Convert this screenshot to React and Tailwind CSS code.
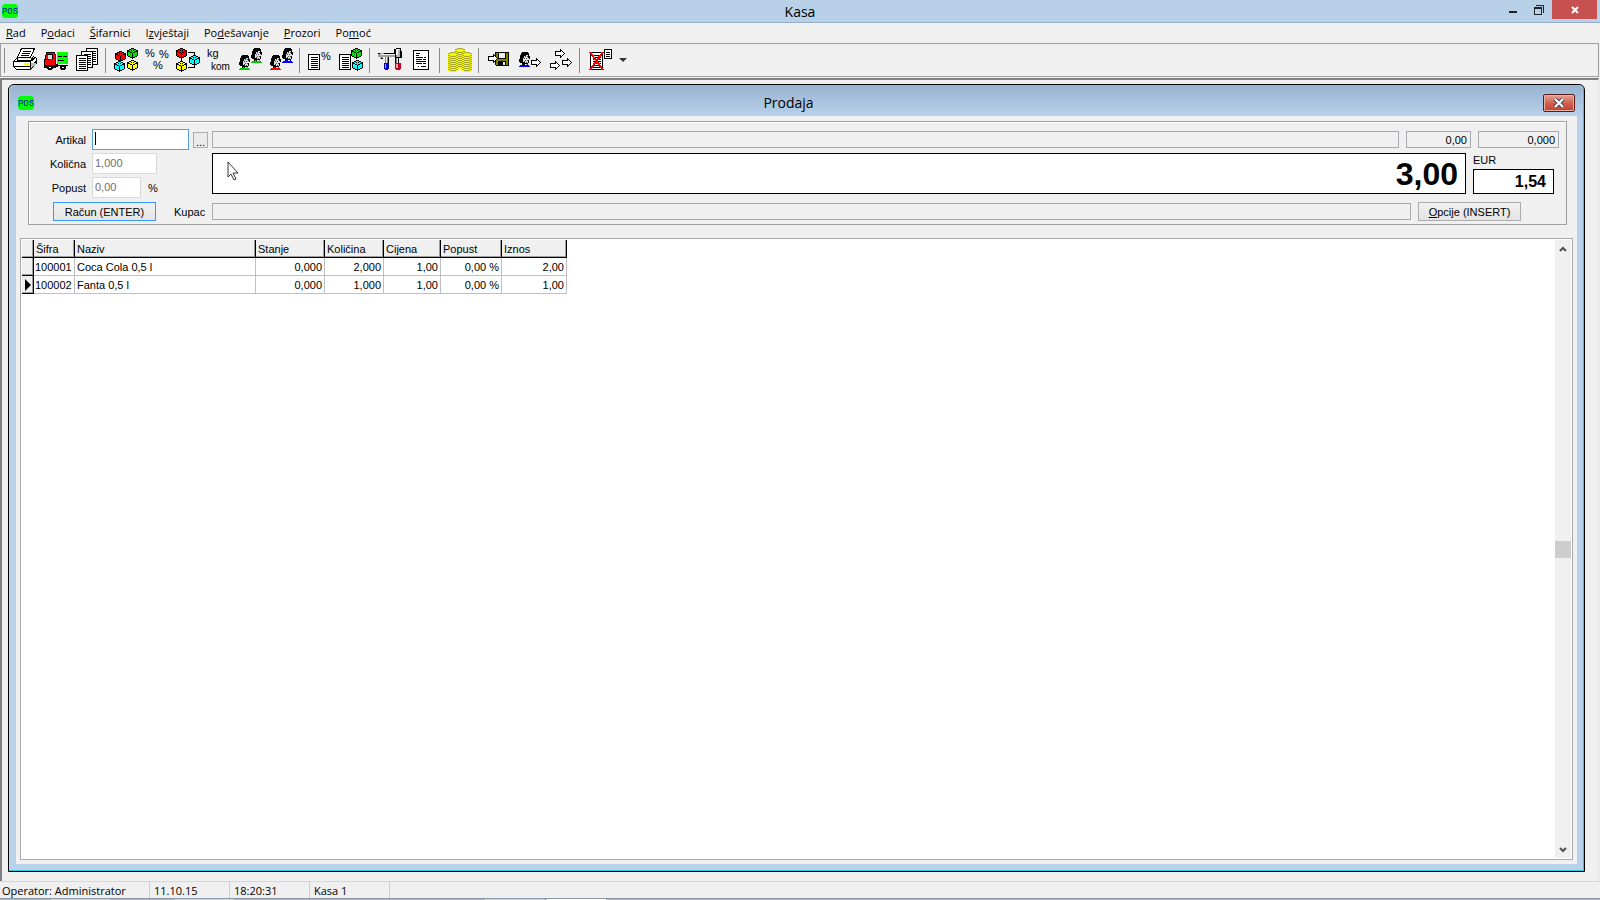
import React, { useState } from 'react';

const MENU = [
  ['', 'R', 'ad'],
  ['P', 'o', 'daci'],
  ['', 'Š', 'ifarnici'],
  ['I', 'z', 'vještaji'],
  ['Po', 'd', 'ešavanje'],
  ['', 'P', 'rozori'],
  ['Po', 'm', 'oć'],
];

const ITEMS = [
  { sifra: '100001', naziv: 'Coca Cola 0,5 l', stanje: '0,000', kolicina: '2,000', cijena: '1,00', popust: '0,00 %', iznos: '2,00' },
  { sifra: '100002', naziv: 'Fanta 0,5 l', stanje: '0,000', kolicina: '1,000', cijena: '1,00', popust: '0,00 %', iznos: '1,00' },
];

// ---------- ICONS (24x24 pixel art) ----------

const Icon = ({ children }) => (
  <svg width="24" height="24" viewBox="0 0 24 24" shapeRendering="crispEdges" className="overflow-visible" aria-hidden="true">
    {children}
  </svg>
);

const Cube = ({ x, y, color }) => (
  <g transform={`translate(${x} ${y})`}>
    <path d="M5.500.5l5 2v5l-5 3-5-3v-5z" fill={color} stroke="#000" />
    <path d="M1 3h2v1h2v1h1v-1h2v-1h2v1h-2v1h-2v5h-1v-5h-2v-1h-2zM4 2h1v1h-1zM6 2h1v1h-1z" fill="#000" />
  </g>
);

const Head = ({ x, y, shirt }) => (
  <g transform={`translate(${x} ${y})`}>
    <path d="M3 0h6v1h1v3h1v3h-1v4h-1v1h-3v1h-3v-2h-2v-1h-1v-3h1v-4h1v-2h1z" fill="#000" />
    <path d="M5 4h2v-1h2v3h1v2h-1v3h-3v-1h-2v-4h1z" fill="#dcdcdc" />
    <path d="M6 4h1v1h-1zM8 4h1v1h-1zM5 6h1v1h-1zM7 6h1v1h-1zM6 8h1v1h-1zM8 8h1v1h-1zM5 9h1v1h-1zM7 10h1v1h-1z" fill="#555" />
    <path d="M1 13h3v-1h1v1h3v-1h1v1h1v1h1v1h-11v-1h1z" fill={shirt} />
  </g>
);

const Arrow = ({ x, y }) => (
  <path
    transform={`translate(${x} ${y})`}
    d="M.5 2.500h5v-2l4 4-4 4v-2h-5z"
    fill="#fff"
    stroke="#000"
    strokeWidth="1"
  />
);

const Sheet = ({ x, y, w = 12, h = 15 }) => (
  <g transform={`translate(${x} ${y})`}>
    <rect width={w} height={h} fill="#000" />
    <rect x="1" y="1" width={w - 2} height={h - 2} fill="#fff" />
    {Array.from({ length: Math.floor((h - 4) / 2) }, (_, i) => (
      <rect key={i} x={w > 10 ? 3 : 2} y={3 + i * 2} width={w > 10 ? w - 5 : w - 4} height="1" fill="#000" />
    ))}
  </g>
);

const Percent = ({ x, y }) => (
  <text x={x} y={y} fontSize="11" fontFamily="Liberation Sans, sans-serif" fill="#000">%</text>
);

const PrinterIcon = () => (
  <Icon>
    <path d="M8.5.5h13l-4 9h-13z" fill="#fff" stroke="#000" />
    <path d="M10 3h8v1h-8zM9 5h8v1h-8zM8 7h8v1h-8z" fill="#000" />
    <path d="M4.500 9.500l-4 4v5l3 3h14l6-6v-5l-3-2-3 4h-13z" fill="#fff" stroke="#000" />
    <path d="M.5 13.500h17l5-4M17.500 13.500v8M1 18.500h16l6-5" fill="none" stroke="#000" />
    <path d="M18 15h5v2l-5 3z" fill="#bbb" />
    <path d="M11 15h5v2h-5z" fill="#ff0" />
  </Icon>
);

const TruckIcon = () => (
  <Icon>
    <path d="M2 4h9v2h1v14h-12v-9h1v-4h1z" fill="#000" />
    <path d="M3 5h7v1h-7zM2 7h2v4h-2zM5 11h6v6h-10v-5h4zM9 6h2v5h-2z" fill="#f00" />
    <path d="M4 7h4v4h-4z" fill="#ddd" />
    <path d="M13 4h11v12h-11z" fill="#0f0" />
    <path d="M14 8h4v1h-4zM19 8h4v1h-4zM14 12h6v1h-6zM0 17h24v1h-24zM12 16h2v3h-2z" fill="#000" />
    <path d="M4 17h4v1h1v3h-1v1h-4v-1h-1v-3h1zM17 17h4v1h1v3h-1v1h-4v-1h-1v-3h1z" fill="#000" />
    <path d="M5 19h2v1h-2zM18 19h2v1h-2z" fill="#fff" />
  </Icon>
);

const DocsIcon = () => (
  <Icon>
    <Sheet x={11} y={0} w={12} h={17} />
    <Sheet x={6} y={3} w={12} h={17} />
    <Sheet x={1} y={7} w={12} h={16} />
  </Icon>
);

const CubesIcon = () => (
  <Icon>
    <Cube x={13} y={0} color="#00e000" />
    <Cube x={1} y={3} color="#f00" />
    <Cube x={13} y={12} color="#ff0" />
    <Cube x={0} y={13} color="#0ff" />
  </Icon>
);

const PercentsIcon = () => (
  <Icon>
    <Percent x={0} y={9} />
    <Percent x={14} y={10} />
    <Percent x={8} y={21} />
  </Icon>
);

const LinkedCubesIcon = () => (
  <Icon>
    <path d="M11.500 4.500h7v4M5.500 10v4M11.500 19.500h7v-3" fill="none" stroke="#000" />
    <Cube x={0} y={0} color="#f00" />
    <Cube x={13} y={7} color="#0ff" />
    <Cube x={0} y={13} color="#ff0" />
  </Icon>
);

const UnitsIcon = () => (
  <Icon>
    <text x="0" y="9" fontSize="11" fontFamily="Liberation Sans, sans-serif">kg</text>
    <text x="4" y="22" fontSize="10" fontFamily="Liberation Sans, sans-serif">kom</text>
  </Icon>
);

const PeopleIcon = ({ front, back }) => (
  <Icon>
    <Head x={13} y={0} shirt={back} />
    <Head x={1} y={7} shirt={front} />
  </Icon>
);

const ListPercentIcon = () => (
  <Icon>
    <Sheet x={0} y={6} w={12} h={16} />
    <Percent x={13} y={12} />
  </Icon>
);

const ListCubesIcon = () => (
  <Icon>
    <Sheet x={0} y={6} w={12} h={16} />
    <Cube x={12} y={0} color="#00e000" />
    <Cube x={13} y={12} color="#0ff" />
  </Icon>
);

const ToolsIcon = () => (
  <Icon>
    <path d="M1 5h15v-4h2v-1h5v3h1v7h-3v8h-4v-9h-6v9h-4v-9h-2v2h-3v-3h-2v-3h1z" fill="#000" />
    <path d="M0 6h2v-1h4v1h11v3h-12v1h-2v1h-1v-2h-2z" fill="#a0a0a0" />
    <path d="M3 6h14v1h-14zM18 1h4v7h-4z" fill="#f0f0f0" />
    <path d="M20 2h2v7h-4v-2h2z" fill="#b0b0b0" />
    <path d="M7 9h3v8h-3zM18 10h2v8h-2z" fill="#888" />
    <path d="M8 9h1v8h-1zM19 10h1v7h-1z" fill="#eee" />
    <path d="M6 15h5v6h-1v1h-3v-1h-1z" fill="#0000a0" />
    <path d="M7 15h2v6h-2z" fill="#00f" />
    <path d="M7 16h1v4h-1z" fill="#0ff" />
    <path d="M17 15h6v6h-1v1h-4v-1h-1z" fill="#c00020" />
    <path d="M18 16h2v4h-2z" fill="#f9a" />
  </Icon>
);

const ReportIcon = () => (
  <Icon>
    <path d="M4 2h16v20h-16z" fill="#000" />
    <path d="M5 3h14v18h-14z" fill="#fff" />
    <path d="M7 5h4v1h-4zM7 7h3v1h-3zM7 9h7v1h-7zM15 9h2v1h-2zM7 11h6v1h-6zM14 11h3v1h-3zM7 13h10v1h-10zM7 15h6v1h-6zM14 15h3v1h-3zM12 18h5v1h-5zM9 18h1v1h-1z" fill="#000" />
  </Icon>
);

const Stack = ({ x, y, h }) => (
  <g transform={`translate(${x} ${y})`}>
    <path d={`M2 0h6v1h2v${h - 2}h-2v1h-6v-1h-2v-${h - 2}h2z`} fill="#f5f500" />
    {Array.from({ length: Math.floor((h - 4) / 2) }, (_, i) => (
      <path key={i} d={`M0 ${3 + i * 2}h2v1h6v-1h2v1h-2v1h-6v-1h-2z`} fill="#a9a930" />
    ))}
    <path d="M2 0h6v1h-6zM0 1h2v1h-2zM8 1h2v1h-2z" fill="#a9a930" />
  </g>
);

const CoinsIcon = () => (
  <Icon>
    <Stack x={7} y={0} h={21} />
    <Stack x={0} y={4} h={20} />
    <Stack x={14} y={4} h={20} />
  </Icon>
);

const SaveIcon = () => (
  <Icon>
    <path d="M8 4h14v14h-13v-1h-1z" fill="#000" />
    <path d="M9 5h12v12h-12z" fill="#808000" />
    <path d="M11 5h8v6h-8z" fill="#000" />
    <path d="M12 5h6v5h-6z" fill="#eee" />
    <path d="M11 13h8v4h-8z" fill="#000" />
    <path d="M16 14h2v3h-2z" fill="#eee" />
    <Arrow x={1} y={6} />
  </Icon>
);

const PersonArrowIcon = () => (
  <Icon>
    <Head x={1} y={4} shirt="#00f" />
    <Arrow x={13} y={10} />
  </Icon>
);

const ArrowsIcon = () => (
  <Icon>
    <Arrow x={6} y={1} />
    <Arrow x={1} y={13} />
    <Arrow x={13} y={10} />
  </Icon>
);

const DeleteDocIcon = () => (
  <Icon>
    <Sheet x={2} y={4} w={13} h={18} />
    <Sheet x={16} y={1} w={8} h={10} />
    <path d="M2 4l13 18M15 4l-13 18" fill="none" stroke="#f00" strokeWidth="2" />
  </Icon>
);

// Toolbar groups, a divider is drawn before each one
const TOOLBAR = [
  [
    { label: 'Štampa', icon: <PrinterIcon /> },
    { label: 'Dostava', icon: <TruckIcon /> },
    { label: 'Dokumenti', icon: <DocsIcon /> },
  ],
  [
    { label: 'Artikli', icon: <CubesIcon /> },
    { label: 'Porezi', icon: <PercentsIcon /> },
    { label: 'Grupe', icon: <LinkedCubesIcon /> },
    { label: 'Jedinice mjere', icon: <UnitsIcon /> },
    { label: 'Kupci', icon: <PeopleIcon front="#0c0" back="#0c0" /> },
    { label: 'Operateri', icon: <PeopleIcon front="#f00" back="#00f" /> },
  ],
  [
    { label: 'Izvještaj poreza', icon: <ListPercentIcon /> },
    { label: 'Izvještaj artikala', icon: <ListCubesIcon /> },
  ],
  [
    { label: 'Alati', icon: <ToolsIcon /> },
    { label: 'Račun', icon: <ReportIcon /> },
  ],
  [{ label: 'Novac', icon: <CoinsIcon /> }],
  [
    { label: 'Snimi', icon: <SaveIcon /> },
    { label: 'Prijava', icon: <PersonArrowIcon /> },
    { label: 'Prenos', icon: <ArrowsIcon /> },
  ],
  [{ label: 'Storno', icon: <DeleteDocIcon /> }],
];

const PosLogo = () => (
  <svg width="16" height="16" viewBox="0 0 16 16" className="overflow-visible" aria-hidden="true">
    <path d="M2 1h12l2 2v10l-2 2h-12l-2-2v-10z" fill="#0f0" />
    <text x="8" y="11" fontSize="9" textAnchor="middle" fontFamily="Liberation Mono, monospace" fill="#0000d0">POS</text>
  </svg>
);

const Chevron = ({ down }) => (
  <svg width="8" height="6" viewBox="0 0 8 6" aria-hidden="true">
    <path d={down ? 'M1 1l3 3 3-3' : 'M1 5l3-3 3 3'} fill="none" stroke="#505050" strokeWidth="2" />
  </svg>
);

const ReadOnly = ({ label, value = '', className }) => (
  <input
    readOnly
    aria-label={label}
    value={value}
    className={`h-[17px] min-w-0 border border-[#a9a9b0] bg-[#f0f0f0] px-[3px] pt-px text-right outline-none ${className}`}
  />
);

const TH = 'border-b border-r border-black bg-[#f0f0f0] px-[2px] pt-px text-left font-normal shadow-[inset_-1px_-1px_0_#a0a0a0]';
const TD = 'border-b border-r border-[#c0c0c0] px-[2px] pt-px';

const App = () => {
  const [artikal, setArtikal] = useState('');

  return (
    <div className="flex min-h-screen flex-col bg-[#f0f0f0] font-['Liberation_Sans',Arial,sans-serif] text-[11px] leading-[13px] text-black">
      {/* TITLE BAR */}
      <header className="flex h-[23px] items-start border-b border-[#93aec6] bg-[#b8d1e9]">
        <div className="flex w-28 pl-[2px] pt-[3px]"><PosLogo /></div>
        <h1 className="flex-1 text-center font-['Open_Sans',sans-serif] text-[14px] leading-[23px]">Kasa</h1>
        <div className="flex w-28 items-start justify-end pr-[3px]">
          <button aria-label="Minimize" className="flex h-[19px] w-[26px] items-center justify-center">
            <svg width="8" height="8" viewBox="0 0 8 8"><path d="M0 5h8v2H0z" fill="#222" /></svg>
          </button>
          <button aria-label="Restore" className="flex h-[19px] w-[26px] items-center justify-center">
            <svg width="10" height="10" viewBox="0 0 10 10" shapeRendering="crispEdges">
              <path d="M2 0h8v8H9V1H2zM0 2h8v8H0zM1 4v5h6V4z" fillRule="evenodd" fill="#222" />
            </svg>
          </button>
          <button aria-label="Close" className="flex h-[19px] w-[45px] items-center justify-center bg-[#c75050]">
            <svg width="8" height="8" viewBox="0 0 8 8"><path d="M1 1l6 6M7 1l-6 6" stroke="#fff" strokeWidth="2" /></svg>
          </button>
        </div>
      </header>

      {/* MENU */}
      <nav className="flex h-5 items-center gap-[15px] pb-[2px] pl-[6px] font-['Open_Sans',sans-serif] text-[11px]">
        {MENU.map(([pre, key, post]) => (
          <button key={pre + key + post} className="whitespace-nowrap">
            {pre}<u>{key}</u>{post}
          </button>
        ))}
      </nav>

      {/* TOOLBAR */}
      <div className="mr-[1px] flex h-[34px] items-center border border-[#a0a0a0] pl-[1px]">
        {TOOLBAR.map((group, i) => (
          <div key={i} className="flex items-center">
            <span className="ml-[2px] mr-[5px] h-[25px] w-px bg-[#8c8c8c]" />
            {group.map((b) => (
              <button key={b.label} aria-label={b.label} className="flex h-7 w-[31px] items-center pl-[3px]">
                {b.icon}
              </button>
            ))}
          </div>
        ))}
        <button aria-label="Više" className="ml-[3px] flex h-7 w-3 items-center">
          <svg width="8" height="4" viewBox="0 0 8 4"><path d="M0 0h8l-4 4z" fill="#333" /></svg>
        </button>
      </div>

      {/* WORKSPACE */}
      <main className="mr-[1px] mt-[1px] flex flex-1 flex-col border-l-2 border-t-2 border-[#808080] border-r border-r-[#e3e3e3] pb-[9px] pl-[6px] pr-[13px] pt-1">
        <section className="flex flex-1 flex-col rounded-t-md border border-black bg-[#b9d1ea] p-px pt-0 shadow-[inset_-1px_-1px_0_#30c8e0]">
          <div className="flex h-[31px] items-center rounded-t-md bg-linear-to-b from-[#98b2d1] to-[#b9d1ea] pl-2 pr-2 pt-1">
            <div className="w-12"><PosLogo /></div>
            <h2 className="flex-1 text-center font-['Open_Sans',sans-serif] text-[14px] leading-5">Prodaja</h2>
            <div className="flex w-16 justify-end">
              <button aria-label="Zatvori" className="flex h-[18px] w-8 items-center justify-center rounded-xs border border-[#5a1a1a] bg-linear-to-b from-[#e4a395] via-[#d0604e] to-[#c0402c] shadow-[inset_0_0_0_1px_#e9b0a8]">
                <svg width="12" height="10" viewBox="0 0 12 10">
                  <path d="M2 1l8 8M10 1l-8 8" stroke="#4a4a5a" strokeWidth="4" />
                  <path d="M2 1l8 8M10 1l-8 8" stroke="#fff" strokeWidth="2" />
                </svg>
              </button>
            </div>
          </div>

          <div className="mx-[6px] mb-[6px] flex flex-1 flex-col bg-[#f0f0f0] px-1 pb-1 pt-[5px]">
            {/* SALE FORM */}
            <div className="ml-2 mr-[6px] flex h-[104px] border border-[#a0a0a0] pr-[7px] pt-[7px] shadow-[inset_1px_1px_0_#fff]">
              <div className="relative flex w-[183px] shrink-0 flex-col gap-[3px]">
                <div className="flex h-[21px] items-center">
                  <label htmlFor="artikal" className="w-[57px] pt-px text-right">Artikal</label>
                  <input
                    id="artikal"
                    value={artikal}
                    onChange={(e) => setArtikal(e.target.value)}
                    className="ml-[6px] h-[21px] w-[97px] border border-[#569de5] bg-white px-[3px] outline-none"
                  />
                  <button aria-label="Traži artikal" className="ml-1 h-4 w-[15px] border border-[#acacac] bg-[#ebebeb] leading-[18px]">...</button>
                </div>
                <div className="flex h-[21px] items-center">
                  <label htmlFor="kolicina" className="w-[57px] pt-px text-right">Količna</label>
                  <input id="kolicina" disabled defaultValue="1,000" className="ml-[6px] h-[21px] w-[65px] border border-[#d9d9d9] bg-white px-[2px] pb-[2px] text-[#6d6d6d]" />
                </div>
                <div className="flex h-[21px] items-center">
                  <label htmlFor="popust" className="w-[57px] pt-px text-right">Popust</label>
                  <input id="popust" disabled defaultValue="0,00" className="ml-[6px] h-[21px] w-[49px] border border-[#d9d9d9] bg-white px-[2px] pb-[2px] text-[#6d6d6d]" />
                  <span className="ml-[7px] pt-px">%</span>
                </div>
                <div className="flex h-[21px] items-center">
                  <button className="ml-6 h-[19px] w-[103px] border border-[#3399ff] bg-linear-to-b from-[#f0f0f0] to-[#e5e5e5] pt-px">Račun (ENTER)</button>
                  <label htmlFor="kupac" className="ml-[18px] pt-px">Kupac</label>
                </div>
                {artikal === '' && <span className="absolute left-[66px] top-[3px] h-[13px] w-px bg-black" />}
              </div>

              <div className="flex min-w-0 flex-1 flex-col">
                <div className="mt-[2px] flex">
                  <ReadOnly label="Naziv artikla" className="flex-1" />
                  <ReadOnly label="Cijena" value="0,00" className="ml-[7px] w-[65px]" />
                  <ReadOnly label="Stanje" value="0,000" className="ml-[7px] w-[81px]" />
                </div>
                <div className="mt-[5px] flex pr-[5px]">
                  <output className="relative h-[41px] flex-1 border border-black bg-white pr-[7px] text-right text-[32px] font-bold leading-[40px]">
                    3,00
                    <svg width="13" height="20" viewBox="0 0 13 20" className="absolute left-[14px] top-[7px]" aria-hidden="true">
                      <path d="M1 1v15l3-3 3 6 2-1-3-6h5z" fill="#fff" stroke="#334" />
                    </svg>
                  </output>
                  <div className="ml-[7px] w-[81px]">
                    <label htmlFor="eur" className="block h-4 pt-px">EUR</label>
                    <input id="eur" readOnly value="1,54" className="block h-[25px] w-full border border-black bg-white pr-[7px] text-right text-[16px] font-bold outline-none" />
                  </div>
                </div>
                <div className="mt-[8px] flex items-center pr-[38px]">
                  <input id="kupac" readOnly value="" className="h-[17px] min-w-0 flex-1 border border-[#a9a9b0] bg-[#f0f0f0] outline-none" />
                  <button className="ml-[7px] h-[19px] w-[103px] border border-[#acacac] bg-linear-to-b from-[#f0f0f0] to-[#e5e5e5] pt-px"><u>O</u>pcije (INSERT)</button>
                </div>
              </div>
            </div>

            {/* ITEMS GRID */}
            <div className="mt-[13px] flex flex-1 border border-[#a9a9a9] bg-white pl-px pt-px">
              <div className="flex-1">
                <table className="w-[545px] table-fixed border-separate border-spacing-0">
                  <colgroup>
                    <col className="w-[12px]" />
                    <col className="w-[41px]" />
                    <col className="w-[181px]" />
                    <col className="w-[69px]" />
                    <col className="w-[59px]" />
                    <col className="w-[57px]" />
                    <col className="w-[61px]" />
                    <col className="w-[65px]" />
                  </colgroup>
                  <thead>
                    <tr className="h-[18px]">
                      <th className={TH} aria-label="Red" />
                      <th className={TH}>Šifra</th>
                      <th className={TH}>Naziv</th>
                      <th className={TH}>Stanje</th>
                      <th className={TH}>Količina</th>
                      <th className={TH}>Cijena</th>
                      <th className={TH}>Popust</th>
                      <th className={TH}>Iznos</th>
                    </tr>
                  </thead>
                  <tbody>
                    {ITEMS.map((item, i) => (
                      <tr key={item.sifra} className="h-[18px]">
                        <td className="border-b border-r border-black bg-[#f0f0f0] pl-[3px] shadow-[inset_-1px_-1px_0_#a0a0a0]">
                          {i === 1 && <svg width="6" height="12" viewBox="0 0 6 12" className="block"><path d="M0 0l6 6-6 6z" /></svg>}
                        </td>
                        <td className="whitespace-nowrap border-b border-r border-[#c0c0c0] px-px pt-px">{item.sifra}</td>
                        <td className={TD}>{item.naziv}</td>
                        <td className={`${TD} text-right`}>{item.stanje}</td>
                        <td className={`${TD} text-right`}>{item.kolicina}</td>
                        <td className={`${TD} text-right`}>{item.cijena}</td>
                        <td className={`${TD} text-right`}>{item.popust}</td>
                        <td className={`${TD} text-right`}>{item.iznos}</td>
                      </tr>
                    ))}
                  </tbody>
                </table>
              </div>

              {/* SCROLLBAR */}
              <div className="mb-px mr-px flex w-4 flex-col items-center bg-[#f0f0f0]">
                <button aria-label="Gore" className="flex h-[17px] w-full items-center justify-center"><Chevron /></button>
                <div className="flex w-full flex-1 items-center">
                  <div className="h-[17px] w-full bg-[#cdcdcd]" />
                </div>
                <button aria-label="Dole" className="flex h-[17px] w-full items-center justify-center"><Chevron down /></button>
              </div>
            </div>
          </div>
        </section>
      </main>

      {/* STATUS BAR */}
      <footer className="flex h-[17px] items-stretch border-t border-[#d7d7d7] font-['Open_Sans',sans-serif] text-[11px] leading-[18px]">
        <span className="w-[150px] border-r border-[#d0d0d0] pl-[2px]">Operator: Administrator</span>
        <span className="w-20 border-r border-[#d0d0d0] pl-1">11.10.15</span>
        <span className="w-20 border-r border-[#d0d0d0] pl-1">18:20:31</span>
        <span className="w-20 border-r border-[#d0d0d0] pl-1">Kasa 1</span>
      </footer>

      {/* top edge of the taskbar */}
      <div className="flex h-[2px] border-t border-[#8b98a6] bg-[#a9b8c6]">
        <span className="ml-[51px] w-[59px] bg-[#d3dbe2]" />
        <span className="ml-[65px] w-[59px] bg-[#d3dbe2]" />
        <span className="ml-[251px] w-[59px] bg-[#d3dbe2]" />
        <span className="ml-[3px] w-[59px] bg-white" />
      </div>
    </div>
  );
};

export default App;
